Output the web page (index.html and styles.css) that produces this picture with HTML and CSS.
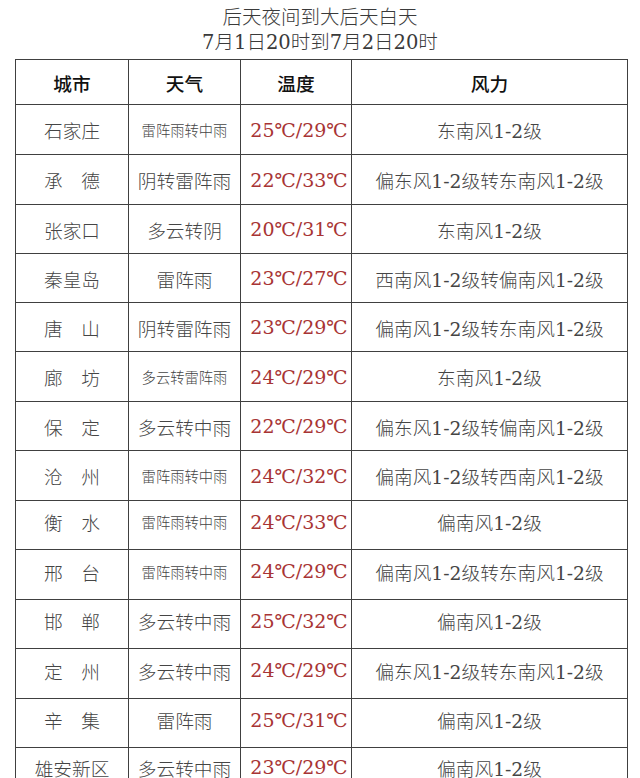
FILE: index.html
```html
<!DOCTYPE html>
<html lang="zh-CN">
<head>
<meta charset="utf-8">
<title>天气预报</title>
<link rel="stylesheet" href="styles.css">
</head>
<body>
<div class="title">
  <div class="t1">后天夜间到大后天白天</div>
  <div class="t2">7月1日20时到7月2日20时</div>
</div>
<table class="wx">
  <colgroup>
    <col class="c1"><col class="c2"><col class="c3"><col class="c4">
  </colgroup>
  <thead>
    <tr class="head"><th>城市</th><th>天气</th><th>温度</th><th>风力</th></tr>
  </thead>
  <tbody>
    <tr class="first"><td>石家庄</td><td class="sm">雷阵雨转中雨</td><td class="tp">25℃/29℃</td><td>东南风1-2级</td></tr>
    <tr><td>承　德</td><td>阴转雷阵雨</td><td class="tp">22℃/33℃</td><td>偏东风1-2级转东南风1-2级</td></tr>
    <tr><td>张家口</td><td>多云转阴</td><td class="tp">20℃/31℃</td><td>东南风1-2级</td></tr>
    <tr><td>秦皇岛</td><td>雷阵雨</td><td class="tp">23℃/27℃</td><td>西南风1-2级转偏南风1-2级</td></tr>
    <tr><td>唐　山</td><td>阴转雷阵雨</td><td class="tp">23℃/29℃</td><td>偏南风1-2级转东南风1-2级</td></tr>
    <tr><td>廊　坊</td><td class="sm">多云转雷阵雨</td><td class="tp">24℃/29℃</td><td>东南风1-2级</td></tr>
    <tr><td>保　定</td><td>多云转中雨</td><td class="tp">22℃/29℃</td><td>偏东风1-2级转偏南风1-2级</td></tr>
    <tr><td>沧　州</td><td class="sm">雷阵雨转中雨</td><td class="tp">24℃/32℃</td><td>偏南风1-2级转西南风1-2级</td></tr>
    <tr class="up"><td>衡　水</td><td class="sm">雷阵雨转中雨</td><td class="tp">24℃/33℃</td><td>偏南风1-2级</td></tr>
    <tr class="up"><td>邢　台</td><td class="sm">雷阵雨转中雨</td><td class="tp">24℃/29℃</td><td>偏南风1-2级转东南风1-2级</td></tr>
    <tr class="up"><td>邯　郸</td><td>多云转中雨</td><td class="tp">25℃/32℃</td><td>偏南风1-2级</td></tr>
    <tr class="up"><td>定　州</td><td>多云转中雨</td><td class="tp">24℃/29℃</td><td>偏东风1-2级转东南风1-2级</td></tr>
    <tr class="up"><td>辛　集</td><td>雷阵雨</td><td class="tp">25℃/31℃</td><td>偏南风1-2级</td></tr>
    <tr class="last"><td>雄安新区</td><td>多云转中雨</td><td class="tp">23℃/29℃</td><td>偏南风1-2级</td></tr>
  </tbody>
</table>
</body>
</html>
```
FILE: styles.css
```css
html, body {
  margin: 0;
  padding: 0;
  background: #ffffff;
}
body {
  font-family: "DejaVu Serif", "Noto Sans CJK SC", serif;
  color: #454545;
  font-weight: 300;
}
.title {
  padding-top: 6px;
  text-align: center;
  color: #3a3a3a;
}
.t1 {
  font-size: 19.5px;
  line-height: 24.5px;
}
.t2 {
  font-size: 19.5px;
  line-height: 24.5px;
}
.wx {
  margin: 4px 0 0 15px;
  border-collapse: collapse;
  table-layout: fixed;
  width: 612px;
}
.c1 { width: 113px; }
.c2 { width: 112px; }
.c3 { width: 111px; }
.c4 { width: 276px; }
.wx th, .wx td {
  border: 1px solid #404040;
  padding: 0;
  text-align: center;
  vertical-align: middle;
  font-size: 18.7px;
  white-space: nowrap;
  overflow: hidden;
}
.wx th {
  color: #111111;
  font-weight: 500;
}
.head { height: 45px; }
.wx tbody tr { height: 50px; }
.wx tbody tr:nth-child(2n+3) { height: 49px; }
.wx tbody tr:nth-child(4) { height: 49px; }
.wx tbody tr.last { height: 50px; }
.wx tbody tr.up td { padding-bottom: 7px; }
.wx tbody tr.last td { padding-bottom: 11px; }
.wx td.sm { font-size: 14.3px; }
.wx td.tp {
  color: #a83434;
  font-size: 19px;
  font-weight: 300;
  padding-left: 6px;
}
```
